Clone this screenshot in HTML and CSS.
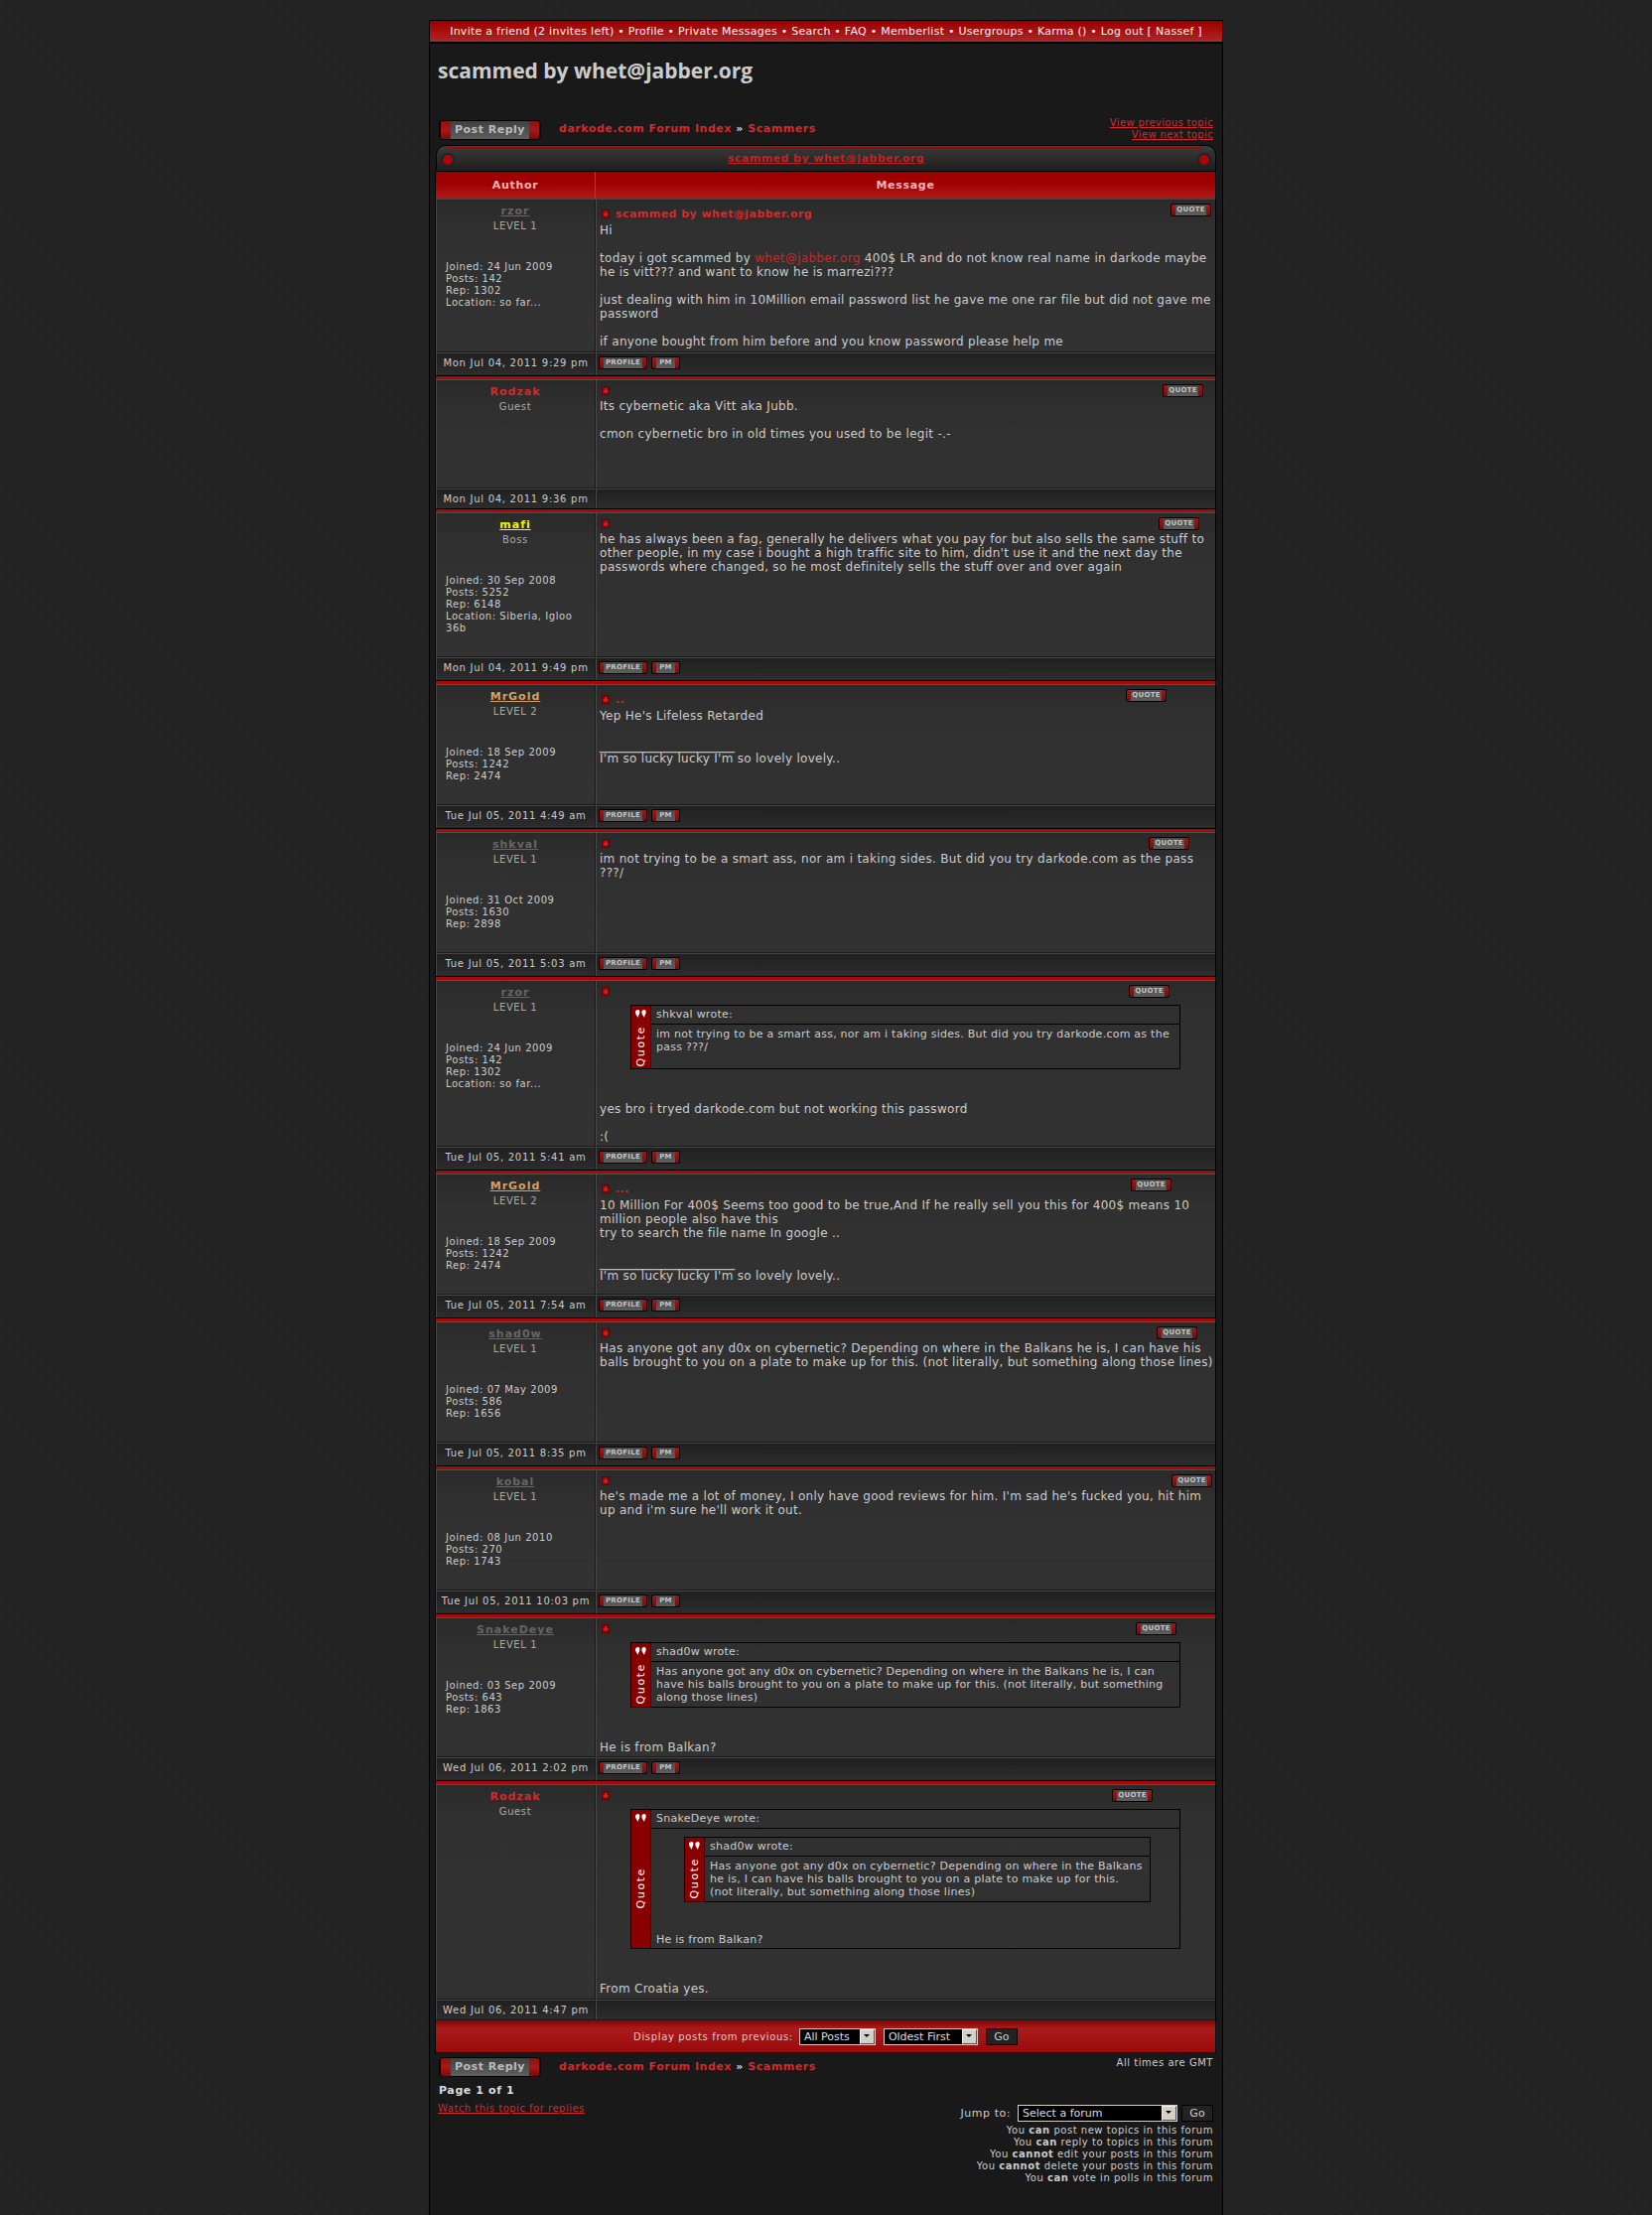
FILE: index.html
```html
<!DOCTYPE html>
<html lang="en">
<head>
    <meta charset="UTF-8">
    <title>scammed by whet@jabber.org</title>
    <link rel="stylesheet" href="styles.css">
</head>
<body>
<svg class="defs" width="0" height="0">
    <symbol id="post-icon" viewBox="0 0 8 9">
        <rect width="8" height="9" fill="#5c0606"/>
        <path d="M1 1h6v7H1z" fill="#7a0c0c"/>
        <path d="M3 2h2v2h1.500v1.500L4 7.500 1.500 5.500V4H3z" fill="#e01818"/>
    </symbol>
    <symbol id="quote-marks" viewBox="0 0 11 8">
        <path d="M3 0C1 0 0 1.200 0 2.600 0 4.600 2 6.500 2.700 8 2.800 6 4.400 4.200 4.400 2.300 4.400 1 4 0 3 0Z" fill="#fff"/>
        <path d="M9.300 0C7.300 0 6.300 1.200 6.300 2.600 6.300 4.600 8.300 6.500 9 8 9.100 6 10.700 4.200 10.700 2.300 10.700 1 10.300 0 9.300 0Z" fill="#fff"/>
    </symbol>
</svg>

<div class="wrapper">
    <div class="top-nav">
        Invite a friend (2 invites left) &bull; Profile &bull; Private Messages &bull; Search &bull; FAQ &bull; Memberlist &bull; Usergroups &bull; Karma () &bull; Log out [ Nassef ]
    </div>

    <h1 class="topic-title">scammed by whet@jabber.org</h1>

    <div class="action-row">
        <a class="btn-reply">Post Reply</a>
        <div class="crumbs"><a>darkode.com Forum Index</a> <span>&raquo;</span> <a>Scammers</a></div>
        <div class="topic-links">
            <a>View previous topic</a><br>
            <a>View next topic</a>
        </div>
    </div>

    <div class="cap">
        <i class="cap-dot cap-dot-left"></i>
        <a>scammed by whet@jabber.org</a>
        <i class="cap-dot cap-dot-right"></i>
    </div>

    <table class="posts">
        <tr>
            <th class="col-author">Author</th>
            <th>Message</th>
        </tr>

        <!-- post 1 -->
        <tr class="post-row first-post">
            <td class="poster">
                <a class="name name-grey">rzor</a>
                <div class="rank">LEVEL 1</div>
                <div class="stats">Joined: 24 Jun 2009<br>Posts: 142<br>Rep: 1302<br>Location: so far...</div>
            </td>
            <td class="message">
                <div class="msg-head has-subject"><svg class="post-icon"><use href="#post-icon"/></svg><span class="subject">scammed by whet@jabber.org</span><a class="btn-small btn-quote q1">QUOTE</a></div>
                Hi<br><br>
                today i got scammed by <a class="inline-link">whet@jabber.org</a> 400$ LR and do not know real name in darkode maybe he is vitt??? and want to know he is marrezi???<br><br>
                just dealing with him in 10Million email password list he gave me one rar file but did not gave me password<br><br>
                if anyone bought from him before and you know password please help me
            </td>
        </tr>
        <tr class="foot-row">
            <td class="post-date">Mon Jul 04, 2011 9:29 pm</td>
            <td class="post-tools"><a class="btn-small">PROFILE</a><a class="btn-small">PM</a></td>
        </tr>
        <tr class="sep-row"><td colspan="2"></td></tr>

        <!-- post 2 -->
        <tr class="post-row guest-short">
            <td class="poster">
                <a class="name name-red">Rodzak</a>
                <div class="rank">Guest</div>
            </td>
            <td class="message">
                <div class="msg-head"><svg class="post-icon"><use href="#post-icon"/></svg><a class="btn-small btn-quote q2">QUOTE</a></div>
                Its cybernetic aka Vitt aka Jubb.<br><br>
                cmon cybernetic bro in old times you used to be legit -.-
            </td>
        </tr>
        <tr class="foot-row foot-short">
            <td class="post-date">Mon Jul 04, 2011 9:36 pm</td>
            <td class="post-tools"></td>
        </tr>
        <tr class="sep-row"><td colspan="2"></td></tr>

        <!-- post 3 -->
        <tr class="post-row">
            <td class="poster">
                <a class="name name-yellow">mafi</a>
                <div class="rank">Boss</div>
                <div class="stats">Joined: 30 Sep 2008<br>Posts: 5252<br>Rep: 6148<br>Location: Siberia, Igloo 36b</div>
            </td>
            <td class="message">
                <div class="msg-head"><svg class="post-icon"><use href="#post-icon"/></svg><a class="btn-small btn-quote q3">QUOTE</a></div>
                he has always been a fag, generally he delivers what you pay for but also sells the same stuff to other people, in my case i bought a high traffic site to him, didn't use it and the next day the passwords where changed, so he most definitely sells the stuff over and over again
            </td>
        </tr>
        <tr class="foot-row">
            <td class="post-date">Mon Jul 04, 2011 9:49 pm</td>
            <td class="post-tools"><a class="btn-small">PROFILE</a><a class="btn-small">PM</a></td>
        </tr>
        <tr class="sep-row"><td colspan="2"></td></tr>

        <!-- post 4 -->
        <tr class="post-row">
            <td class="poster">
                <a class="name name-gold">MrGold</a>
                <div class="rank">LEVEL 2</div>
                <div class="stats">Joined: 18 Sep 2009<br>Posts: 1242<br>Rep: 2474</div>
            </td>
            <td class="message">
                <div class="msg-head has-subject"><svg class="post-icon"><use href="#post-icon"/></svg><span class="subject">..</span><a class="btn-small btn-quote q4">QUOTE</a></div>
                Yep He's Lifeless Retarded<br><br>
                <span class="sig-line">_________________</span><br>
                I'm so lucky lucky I'm so lovely lovely..
            </td>
        </tr>
        <tr class="foot-row">
            <td class="post-date">Tue Jul 05, 2011 4:49 am</td>
            <td class="post-tools"><a class="btn-small">PROFILE</a><a class="btn-small">PM</a></td>
        </tr>
        <tr class="sep-row"><td colspan="2"></td></tr>

        <!-- post 5 -->
        <tr class="post-row">
            <td class="poster">
                <a class="name name-grey">shkval</a>
                <div class="rank">LEVEL 1</div>
                <div class="stats">Joined: 31 Oct 2009<br>Posts: 1630<br>Rep: 2898</div>
            </td>
            <td class="message">
                <div class="msg-head"><svg class="post-icon"><use href="#post-icon"/></svg><a class="btn-small btn-quote q5">QUOTE</a></div>
                im not trying to be a smart ass, nor am i taking sides. But did you try darkode.com as the pass ???/
            </td>
        </tr>
        <tr class="foot-row">
            <td class="post-date">Tue Jul 05, 2011 5:03 am</td>
            <td class="post-tools"><a class="btn-small">PROFILE</a><a class="btn-small">PM</a></td>
        </tr>
        <tr class="sep-row"><td colspan="2"></td></tr>

        <!-- post 6 -->
        <tr class="post-row">
            <td class="poster">
                <a class="name name-grey">rzor</a>
                <div class="rank">LEVEL 1</div>
                <div class="stats">Joined: 24 Jun 2009<br>Posts: 142<br>Rep: 1302<br>Location: so far...</div>
            </td>
            <td class="message">
                <div class="msg-head"><svg class="post-icon"><use href="#post-icon"/></svg><a class="btn-small btn-quote q6">QUOTE</a></div>
                <div class="quote">
                    <div class="quote-side"><svg class="quote-marks"><use href="#quote-marks"/></svg><span class="quote-label">Quote</span></div>
                    <div class="quote-main">
                        <div class="quote-author">shkval wrote:</div>
                        <div class="quote-body">im not trying to be a smart ass, nor am i taking sides. But did you try darkode.com as the pass ???/</div>
                    </div>
                </div>
                yes bro i tryed darkode.com but not working this password<br><br>
                :(
            </td>
        </tr>
        <tr class="foot-row">
            <td class="post-date">Tue Jul 05, 2011 5:41 am</td>
            <td class="post-tools"><a class="btn-small">PROFILE</a><a class="btn-small">PM</a></td>
        </tr>
        <tr class="sep-row"><td colspan="2"></td></tr>

        <!-- post 7 -->
        <tr class="post-row">
            <td class="poster">
                <a class="name name-gold">MrGold</a>
                <div class="rank">LEVEL 2</div>
                <div class="stats">Joined: 18 Sep 2009<br>Posts: 1242<br>Rep: 2474</div>
            </td>
            <td class="message">
                <div class="msg-head has-subject"><svg class="post-icon"><use href="#post-icon"/></svg><span class="subject">...</span><a class="btn-small btn-quote q7">QUOTE</a></div>
                10 Million For 400$ Seems too good to be true,And If he really sell you this for 400$ means 10 million people also have this<br>
                try to search the file name In google ..<br><br>
                <span class="sig-line">_________________</span><br>
                I'm so lucky lucky I'm so lovely lovely..
            </td>
        </tr>
        <tr class="foot-row">
            <td class="post-date">Tue Jul 05, 2011 7:54 am</td>
            <td class="post-tools"><a class="btn-small">PROFILE</a><a class="btn-small">PM</a></td>
        </tr>
        <tr class="sep-row"><td colspan="2"></td></tr>

        <!-- post 8 -->
        <tr class="post-row">
            <td class="poster">
                <a class="name name-grey">shad0w</a>
                <div class="rank">LEVEL 1</div>
                <div class="stats">Joined: 07 May 2009<br>Posts: 586<br>Rep: 1656</div>
            </td>
            <td class="message">
                <div class="msg-head"><svg class="post-icon"><use href="#post-icon"/></svg><a class="btn-small btn-quote q8">QUOTE</a></div>
                Has anyone got any d0x on cybernetic? Depending on where in the Balkans he is, I can have his balls brought to you on a plate to make up for this. (not literally, but something along those lines)
            </td>
        </tr>
        <tr class="foot-row">
            <td class="post-date">Tue Jul 05, 2011 8:35 pm</td>
            <td class="post-tools"><a class="btn-small">PROFILE</a><a class="btn-small">PM</a></td>
        </tr>
        <tr class="sep-row"><td colspan="2"></td></tr>

        <!-- post 9 -->
        <tr class="post-row">
            <td class="poster">
                <a class="name name-grey">kobal</a>
                <div class="rank">LEVEL 1</div>
                <div class="stats">Joined: 08 Jun 2010<br>Posts: 270<br>Rep: 1743</div>
            </td>
            <td class="message">
                <div class="msg-head"><svg class="post-icon"><use href="#post-icon"/></svg><a class="btn-small btn-quote q9">QUOTE</a></div>
                he's made me a lot of money, I only have good reviews for him. I'm sad he's fucked you, hit him up and i'm sure he'll work it out.
            </td>
        </tr>
        <tr class="foot-row">
            <td class="post-date">Tue Jul 05, 2011 10:03 pm</td>
            <td class="post-tools"><a class="btn-small">PROFILE</a><a class="btn-small">PM</a></td>
        </tr>
        <tr class="sep-row"><td colspan="2"></td></tr>

        <!-- post 10 -->
        <tr class="post-row">
            <td class="poster">
                <a class="name name-grey">SnakeDeye</a>
                <div class="rank">LEVEL 1</div>
                <div class="stats">Joined: 03 Sep 2009<br>Posts: 643<br>Rep: 1863</div>
            </td>
            <td class="message">
                <div class="msg-head"><svg class="post-icon"><use href="#post-icon"/></svg><a class="btn-small btn-quote q10">QUOTE</a></div>
                <div class="quote">
                    <div class="quote-side"><svg class="quote-marks"><use href="#quote-marks"/></svg><span class="quote-label">Quote</span></div>
                    <div class="quote-main">
                        <div class="quote-author">shad0w wrote:</div>
                        <div class="quote-body">Has anyone got any d0x on cybernetic? Depending on where in the Balkans he is, I can have his balls brought to you on a plate to make up for this. (not literally, but something along those lines)</div>
                    </div>
                </div>
                He is from Balkan?
            </td>
        </tr>
        <tr class="foot-row">
            <td class="post-date">Wed Jul 06, 2011 2:02 pm</td>
            <td class="post-tools"><a class="btn-small">PROFILE</a><a class="btn-small">PM</a></td>
        </tr>
        <tr class="sep-row"><td colspan="2"></td></tr>

        <!-- post 11 -->
        <tr class="post-row last-post">
            <td class="poster">
                <a class="name name-red">Rodzak</a>
                <div class="rank">Guest</div>
            </td>
            <td class="message">
                <div class="msg-head"><svg class="post-icon"><use href="#post-icon"/></svg><a class="btn-small btn-quote q11">QUOTE</a></div>
                <div class="quote">
                    <div class="quote-side"><svg class="quote-marks"><use href="#quote-marks"/></svg><span class="quote-label">Quote</span></div>
                    <div class="quote-main">
                        <div class="quote-author">SnakeDeye wrote:</div>
                        <div class="quote-body quote-nested">
                            <div class="quote quote-inner">
                                <div class="quote-side"><svg class="quote-marks"><use href="#quote-marks"/></svg><span class="quote-label">Quote</span></div>
                                <div class="quote-main">
                                    <div class="quote-author">shad0w wrote:</div>
                                    <div class="quote-body">Has anyone got any d0x on cybernetic? Depending on where in the Balkans he is, I can have his balls brought to you on a plate to make up for this. (not literally, but something along those lines)</div>
                                </div>
                            </div>
                            He is from Balkan?
                        </div>
                    </div>
                </div>
                From Croatia yes.
            </td>
        </tr>
        <tr class="foot-row foot-short">
            <td class="post-date">Wed Jul 06, 2011 4:47 pm</td>
            <td class="post-tools"></td>
        </tr>

        <tr class="display-row">
            <td colspan="2">
                <div class="display-form">
                    <span class="display-label">Display posts from previous:</span>
                    <div class="fake-select sel-posts"><span>All Posts</span><i class="sel-arrow"></i></div>
                    <div class="fake-select sel-order"><span>Oldest First</span><i class="sel-arrow"></i></div>
                    <a class="btn-go">Go</a>
                </div>
            </td>
        </tr>
    </table>

    <div class="bottom">
        <div class="bottom-left">
            <div class="action-row action-row-low">
                <a class="btn-reply">Post Reply</a>
                <div class="crumbs"><a>darkode.com Forum Index</a> <span>&raquo;</span> <a>Scammers</a></div>
            </div>
            <div class="page-count">Page 1 of 1</div>
            <a class="watch-link">Watch this topic for replies</a>
        </div>
        <div class="bottom-right">
            <div class="times">All times are GMT</div>
            <div class="jump-form">
                <span class="jump-label">Jump to:</span>
                <div class="fake-select sel-forum"><span>Select a forum</span><i class="sel-arrow"></i></div>
                <a class="btn-go">Go</a>
            </div>
            <div class="perms">
                You <b>can</b> post new topics in this forum<br>
                You <b>can</b> reply to topics in this forum<br>
                You <b>cannot</b> edit your posts in this forum<br>
                You <b>cannot</b> delete your posts in this forum<br>
                You <b>can</b> vote in polls in this forum
            </div>
        </div>
    </div>
</div>
</body>
</html>
```

FILE: styles.css
```css
body {
    margin: 0;
    padding-top: 20px;
    background: repeating-linear-gradient(45deg, #202020 0, #202020 1px, #252525 1px, #252525 3px);
    font-family: "DejaVu Sans", Verdana, sans-serif;
    font-size: 10px;
    color: #ccc;
}
.defs {
    position: absolute;
}
a {
    cursor: pointer;
}
.wrapper {
    box-sizing: border-box;
    width: 800px;
    min-height: 2211px;
    margin: 0 auto;
    padding-bottom: 1px;
    background: #191919;
    border-left: 1px solid #000;
    border-right: 1px solid #000;
}

/* top nav */
.top-nav {
    height: 21px;
    line-height: 21px;
    text-align: center;
    color: #f4f4f4;
    font-size: 11px;
    letter-spacing: 0.26px;
    border-top: 1px solid #000;
    border-bottom: 2px solid #000;
    background:
        repeating-linear-gradient(0deg, rgba(0, 0, 0, 0.12) 0, rgba(0, 0, 0, 0.12) 1px, transparent 1px, transparent 2px),
        linear-gradient(#a00000, #b01818 60%, #a83030);
}
.topic-title {
    height: 74px;
    margin: 0;
    padding: 14px 0 0 8px;
    box-sizing: border-box;
    font-family: "Open Sans", "DejaVu Sans", sans-serif;
    font-size: 21px;
    line-height: 26px;
    font-weight: 700;
    color: #ccc;
}

/* buttons + crumbs */
.action-row {
    display: flex;
    align-items: flex-start;
    height: 28px;
    padding: 0 9px;
}
.action-row-low {
    height: 21px;
    padding: 0 0 0 9px;
}
.btn-reply {
    box-sizing: border-box;
    width: 103px;
    height: 20px;
    margin-top: 3px;
    border: 1px solid #000;
    border-radius: 4px;
    font-size: 11px;
    font-weight: 700;
    line-height: 18px;
    letter-spacing: 0.5px;
    text-align: center;
    color: #bbb;
    background:
        linear-gradient(#8e1010, #a81818 50%, #7a0a0a) left / 11px 100% no-repeat,
        linear-gradient(#8e1010, #a81818 50%, #7a0a0a) right / 11px 100% no-repeat,
        linear-gradient(#404040, #5e5e5e);
    box-shadow: inset 12px 0 0 -11px #000, inset -12px 0 0 -11px #000;
}
.action-row-low .btn-reply {
    margin-top: 0;
}
.crumbs {
    margin: 5px 0 0 18px;
    font-size: 11px;
    line-height: 13px;
    font-weight: 700;
    letter-spacing: 0.53px;
    color: #d42a2a;
}
.crumbs span {
    color: #ddd;
}
.action-row-low .crumbs {
    margin-top: 3px;
}
.topic-links {
    margin-left: auto;
    text-align: right;
    line-height: 12px;
    color: #d42a2a;
    letter-spacing: 0.35px;
    padding-right: 0;
}
.topic-links a, .watch-link {
    text-decoration: underline;
}

/* rounded caption above the table */
.cap {
    position: relative;
    box-sizing: border-box;
    height: 27px;
    margin: 0 6px;
    padding-top: 5px;
    border: 1px solid #000;
    border-radius: 10px 10px 0 0;
    line-height: 15px;
    text-align: center;
    font-size: 11px;
    font-weight: 700;
    letter-spacing: 0.45px;
    background:
        linear-gradient(#a81010, #8a0808) 10px 0 / calc(100% - 24px) 3px no-repeat,
        linear-gradient(#3a3a3a 3px, #343434 5px, #1e1e1e);
}
.cap a {
    color: #c42222;
    text-decoration: underline;
}
.cap-dot {
    position: absolute;
    top: 9px;
    width: 10px;
    height: 10px;
    border-radius: 50%;
    background: #a80808;
    box-shadow: 0 0 0 2px #222;
}
.cap-dot-left {
    left: 6px;
}
.cap-dot-right {
    right: 6px;
}

/* posts table */
.posts {
    width: 787px;
    margin-left: 5px;
    border-collapse: separate;
    border-spacing: 0;
    table-layout: fixed;
    border-left: 1px solid #000;
    border-right: 1px solid #000;
    font-size: 12px;
}
.posts th {
    height: 28px;
    padding: 0;
    box-sizing: border-box;
    font-size: 11px;
    letter-spacing: 0.7px;
    color: #f8b4b4;
    border-bottom: 1px solid #444;
    background:
        repeating-linear-gradient(0deg, rgba(0, 0, 0, 0.1) 0, rgba(0, 0, 0, 0.1) 1px, transparent 1px, transparent 2px),
        linear-gradient(#a00000 40%, #b42020);
}
.col-author {
    width: 161px;
    border-right: 1px solid #c83030;
}
.post-row td {
    vertical-align: top;
    border-left: 1px solid #484848;
    border-bottom: 1px solid #1c1c1c;
    background: linear-gradient(#2a2a2a, #303030 30px, #323232);
}
.poster {
    box-sizing: border-box;
    width: 162px;
    padding: 5px 10px 22px 9px;
    text-align: center;
    border-right: 1px solid #1c1c1c;
}
.name {
    display: block;
    font-size: 11px;
    font-weight: 700;
    line-height: 14px;
    letter-spacing: 1px;
}
.name-grey {
    color: #666;
    text-decoration: underline;
}
.name-red {
    color: #d42a2a;
}
.name-yellow {
    color: #f4f400;
    text-decoration: underline;
}
.name-gold {
    color: #d8a060;
    text-decoration: underline;
}
.rank {
    margin-top: 2px;
    font-size: 10px;
    line-height: 12px;
    letter-spacing: 0.6px;
    color: #aaa;
}
.stats {
    margin-top: 29px;
    font-size: 10px;
    line-height: 12px;
    letter-spacing: 0.55px;
    text-align: left;
    color: #ccc;
}
.guest-short td {
    height: 109px;
}
.first-post td {
    height: 154px;
}
.last-post td {
    height: 216px;
}
.message {
    box-sizing: border-box;
    padding: 0 1px 2px 3px;
    line-height: 14px;
    letter-spacing: 0.29px;
    color: #ccc;
}
.msg-head {
    position: relative;
    height: 19px;
}
.msg-head.has-subject {
    height: 24px;
}
.post-icon {
    position: absolute;
    top: 6px;
    left: 2px;
    width: 8px;
    height: 9px;
}
.has-subject .post-icon {
    top: 10px;
}
.subject {
    position: absolute;
    top: 8px;
    left: 16px;
    font-size: 11px;
    font-weight: 700;
    line-height: 14px;
    letter-spacing: 0.45px;
    color: #d42a2a;
}
.inline-link {
    color: #c42a2a;
}
.sig-line {
    font-size: 16px;
    line-height: 14px;
    letter-spacing: 0;
    color: #bbb;
}

/* little buttons */
.btn-small {
    box-sizing: border-box;
    display: inline-block;
    height: 13px;
    padding: 0 4px;
    border: 1px solid #000;
    border-radius: 2px;
    font-size: 7px;
    font-weight: 700;
    line-height: 11px;
    letter-spacing: 0.3px;
    text-align: center;
    color: #c4c4c4;
    background:
        linear-gradient(#a81414, #701010) left / 4px 100% no-repeat,
        linear-gradient(#a81414, #701010) right / 4px 100% no-repeat,
        linear-gradient(#4a4a4a, #5e5e5e);
}
.btn-quote {
    position: absolute;
    top: 4px;
    width: 41px;
}
.q1 { right: 3px; }
.q2 { right: 11px; }
.q3 { right: 15px; }
.q4 { right: 48px; }
.q5 { right: 25px; }
.q6 { right: 45px; }
.q7 { right: 43px; }
.q8 { right: 17px; }
.q9 { right: 2px; }
.q10 { right: 38px; }
.q11 { right: 62px; }

/* quote boxes */
.quote {
    display: flex;
    box-sizing: border-box;
    width: 554px;
    margin: 5px 0 33px 31px;
    border: 1px solid #000;
    font-size: 11px;
    line-height: 13px;
    letter-spacing: 0.25px;
}
.quote-side {
    display: flex;
    flex-direction: column;
    align-items: center;
    width: 19px;
    flex-shrink: 0;
    background: #880000;
    border-right: 1px solid #000;
}
.quote-marks {
    width: 11px;
    height: 8px;
    margin: 4px 0 6px;
    flex-shrink: 0;
}
.quote-label {
    margin: auto 0;
    writing-mode: vertical-rl;
    transform: rotate(180deg);
    font-size: 11px;
    line-height: 14px;
    letter-spacing: 1.6px;
    color: #fff;
}
.quote-main {
    flex: 1;
    min-width: 0;
}
.quote-author {
    height: 18px;
    padding-left: 5px;
    line-height: 18px;
    border-bottom: 1px solid #000;
}
.quote-body {
    min-height: 38px;
    padding: 3px 5px;
}
.quote-nested {
    padding: 8px 30px 2px 5px;
}
.quote-inner {
    width: 470px;
    margin: 0 0 31px 28px;
}

/* post footer */
.foot-row td {
    height: 23px;
    box-sizing: border-box;
    vertical-align: top;
    background:
        repeating-linear-gradient(0deg, rgba(0, 0, 0, 0.14) 0, rgba(0, 0, 0, 0.14) 1px, transparent 1px, transparent 2px),
        linear-gradient(#222, #303030);
    border-top: 1px solid #444;
}
.foot-short td {
    height: 20px;
}
.post-date {
    padding: 0;
    font-size: 10px;
    line-height: 20px;
    letter-spacing: 0.72px;
    text-align: center;
    white-space: nowrap;
    color: #ccc;
    border-right: 1px solid #1c1c1c;
    border-left: 1px solid #484848;
}
.foot-short .post-date {
    line-height: 19px;
}
.post-tools {
    padding: 3px 0 0 2px;
    border-left: 1px solid #484848;
}
.post-tools .btn-small {
    width: 29px;
    margin-right: 4px;
    vertical-align: top;
}
.post-tools .btn-small:first-child {
    width: 49px;
}
.sep-row td {
    height: 5px;
    padding: 0;
    background: #a80808;
    border-top: 1px solid #000;
    border-bottom: 1px solid #505050;
    box-sizing: border-box;
}

/* display bar */
.display-row td {
    box-sizing: border-box;
    height: 34px;
    padding: 0;
    border-bottom: 1px solid #000;
    border-top: 1px solid #1c1c1c;
    background:
        repeating-linear-gradient(0deg, rgba(0, 0, 0, 0.1) 0, rgba(0, 0, 0, 0.1) 1px, transparent 1px, transparent 2px),
        linear-gradient(#960000, #b81a1a 25%, #aa0808);
}
.display-form {
    display: flex;
    align-items: center;
    justify-content: center;
    gap: 8px;
    font-size: 10px;
}
.display-label {
    margin-right: -2px;
    letter-spacing: 0.65px;
    color: #e8c8c8;
}
.fake-select {
    box-sizing: border-box;
    display: flex;
    align-items: center;
    justify-content: space-between;
    height: 17px;
    padding-left: 4px;
    border: 1px solid #d4d0c8;
    font-size: 11px;
    line-height: 15px;
    color: #ddd;
    background: #000;
}
.sel-posts {
    width: 77px;
}
.sel-order {
    width: 95px;
}
.sel-forum {
    width: 161px;
}
.sel-arrow {
    position: relative;
    box-sizing: border-box;
    width: 15px;
    height: 15px;
    background: #d4d0c8;
    border: 1px solid;
    border-color: #eee #555 #555 #eee;
}
.sel-arrow::after {
    content: "";
    position: absolute;
    top: 4px;
    left: 3px;
    border: 3px solid transparent;
    border-top: 3px solid #000;
}
.btn-go {
    box-sizing: border-box;
    width: 32px;
    height: 17px;
    border: 1px solid #000;
    font-size: 11px;
    line-height: 15px;
    text-align: center;
    color: #ccc;
    background: #222;
}

/* below the table */
.bottom {
    display: flex;
    justify-content: space-between;
    padding-top: 4px;
}
.page-count {
    margin: 6px 0 0 9px;
    font-size: 11px;
    font-weight: 700;
    line-height: 13px;
    letter-spacing: 0.6px;
    color: #ddd;
}
.watch-link {
    display: block;
    margin: 6px 0 0 8px;
    line-height: 12px;
    letter-spacing: 0.5px;
    color: #d42a2a;
}
.bottom-right {
    text-align: right;
    padding-right: 9px;
    letter-spacing: 0.53px;
    line-height: 12px;
}
.jump-form {
    display: flex;
    justify-content: flex-end;
    align-items: center;
    gap: 4px;
    margin-top: 36px;
}
.jump-label {
    margin-right: 3px;
    font-size: 11px;
}
.jump-form .fake-select {
    text-align: left;
    letter-spacing: 0;
}
.jump-form .btn-go {
    letter-spacing: 0;
}
.perms {
    margin-top: 3px;
}
```
